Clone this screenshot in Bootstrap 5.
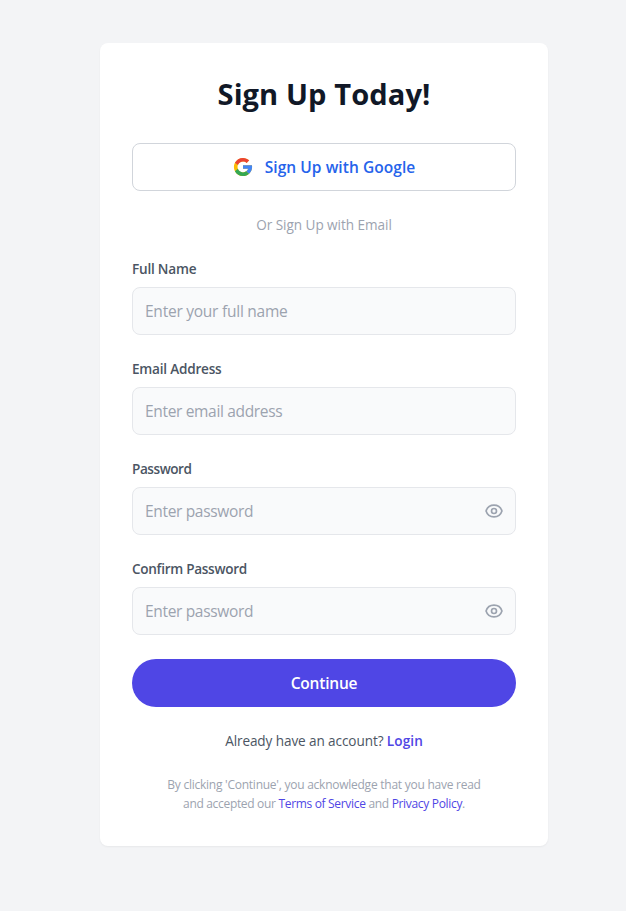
<!DOCTYPE html>
<html lang="en">
<head>
<meta charset="utf-8">
<meta name="viewport" content="width=device-width, initial-scale=1">
<title>Sign Up Today!</title>
<link rel="stylesheet" href="https://cdn.jsdelivr.net/npm/bootstrap@5.3.0/dist/css/bootstrap.min.css">
<style>
  body { background: #f3f4f6; font-family: "Open Sans", "Noto Sans", sans-serif; color: #4b5563; padding: 43px 78px 64px 100px; }
  .signup-card { border-radius: 8px; box-shadow: 0 1px 2px rgba(0,0,0,.05); height: 803px; padding: 32px; }
  .signup-title { font-size: 29.1px; line-height: 36px; letter-spacing: .09px; color: #111827; margin: 1px 0 31px; }
  .google-btn { height: 48px; border: 1px solid #d1d5db; border-radius: 8px; color: #2563eb; font-size: 15.52px; letter-spacing: .05px; gap: 12px; padding: 0; }
  .google-btn span { padding-top: 2px; }
  .text-14 { font-size: 13.58px; line-height: 20px; }
  .divider-text { color: #9ca3af; letter-spacing: -.05px; margin: 24px 0; }
  .field-label { letter-spacing: -.22px; color: #4b5563; margin-bottom: 8px; }
  .label-password { letter-spacing: -.45px; }
  .label-confirm { letter-spacing: -.3px; }
  .field-input, .field-input:focus { height: 48px; border: 1px solid #e5e7eb; border-radius: 8px; background: #f9fafb; font-size: 15.52px; padding: 0 12px; letter-spacing: -.25px; }
  .field-input::placeholder { color: #9ca3af; opacity: 1; }
  .input-tight { letter-spacing: -.34px; }
  .eye-toggle { right: 12px; top: 14px; color: #9ca3af; line-height: 0; }
  .continue-btn, .continue-btn:hover { height: 48px; background: #4f46e5; color: #fff; font-size: 15.52px; letter-spacing: -.22px; border: 0; padding: 8px 0 6px; }
  .accent { color: #4f46e5; }
  .login-line { letter-spacing: -.1px; margin: 24px 0; }
  .login-line .accent { letter-spacing: .08px; }
  .legal { color: #9ca3af; font-size: 12px; line-height: 19px; letter-spacing: -.25px; }
  .legal-second { letter-spacing: -.32px; }
</style>
<script src="https://cdn.jsdelivr.net/npm/bootstrap@5.3.0/dist/js/bootstrap.bundle.min.js"></script>
</head>
<body>
<main class="signup-card bg-white">
  <h1 class="signup-title fw-bold text-center">Sign Up Today!</h1>
  <button type="button" class="google-btn btn bg-white w-100 d-flex align-items-center justify-content-center fw-semibold">
    <svg width="20" height="20" viewBox="2 2 44 44" aria-hidden="true">
      <path fill="#FBBC05" d="M43.611 20.083H42V20H24v8h11.303c-1.649 4.657-6.08 8-11.303 8-6.627 0-12-5.373-12-12s5.373-12 12-12c3.059 0 5.842 1.154 7.961 3.039l5.657-5.657C34.046 6.053 29.268 4 24 4 12.955 4 4 12.955 4 24s8.955 20 20 20 20-8.955 20-20c0-1.341-.138-2.65-.389-3.917z"/>
      <path fill="#EA4335" d="M6.306 14.691l6.571 4.819C14.655 15.108 18.961 12 24 12c3.059 0 5.842 1.154 7.961 3.039l5.657-5.657C34.046 6.053 29.268 4 24 4 16.318 4 9.656 8.337 6.306 14.691z"/>
      <path fill="#34A853" d="M24 44c5.166 0 9.86-1.977 13.409-5.192l-6.19-5.238C29.211 35.091 26.715 36 24 36c-5.202 0-9.619-3.317-11.283-7.946l-6.522 5.025C9.505 39.556 16.227 44 24 44z"/>
      <path fill="#4285F4" d="M43.611 20.083H42V20H24v8h11.303c-.792 2.237-2.231 4.166-4.087 5.571l6.193 5.238C36.971 39.205 44 34 44 24c0-1.341-.138-2.65-.389-3.917z"/>
    </svg>
    <span>Sign Up with Google</span>
  </button>
  <p class="divider-text text-14 text-center">Or Sign Up with Email</p>
  <form>
    <div class="mb-4">
      <label class="field-label text-14 fw-semibold d-block" for="name">Full Name</label>
      <input class="field-input form-control" id="name" type="text" placeholder="Enter your full name">
    </div>
    <div class="mb-4">
      <label class="field-label text-14 fw-semibold d-block" for="email">Email Address</label>
      <input class="field-input input-tight form-control" id="email" type="email" placeholder="Enter email address">
    </div>
    <div class="mb-4">
      <label class="field-label label-password text-14 fw-semibold d-block" for="password">Password</label>
      <div class="position-relative">
        <input class="field-input input-tight form-control" id="password" type="password" placeholder="Enter password">
        <span class="eye-toggle position-absolute">
          <svg width="20" height="20" viewBox="0 0 24 24" fill="none" stroke="currentColor" stroke-width="2" stroke-linecap="round" stroke-linejoin="round"><path d="M15 12a3 3 0 11-6 0 3 3 0 016 0z"/><path d="M2.458 12C3.732 7.943 7.523 5 12 5c4.478 0 8.268 2.943 9.542 7-1.274 4.057-5.064 7-9.542 7-4.477 0-8.268-2.943-9.542-7z"/></svg>
        </span>
      </div>
    </div>
    <div class="mb-4">
      <label class="field-label label-confirm text-14 fw-semibold d-block" for="confirm">Confirm Password</label>
      <div class="position-relative">
        <input class="field-input input-tight form-control" id="confirm" type="password" placeholder="Enter password">
        <span class="eye-toggle position-absolute">
          <svg width="20" height="20" viewBox="0 0 24 24" fill="none" stroke="currentColor" stroke-width="2" stroke-linecap="round" stroke-linejoin="round"><path d="M15 12a3 3 0 11-6 0 3 3 0 016 0z"/><path d="M2.458 12C3.732 7.943 7.523 5 12 5c4.478 0 8.268 2.943 9.542 7-1.274 4.057-5.064 7-9.542 7-4.477 0-8.268-2.943-9.542-7z"/></svg>
        </span>
      </div>
    </div>
    <button type="button" class="continue-btn btn w-100 rounded-pill fw-semibold">Continue</button>
  </form>
  <p class="login-line text-14 text-center">Already have an account? <a href="#" class="accent fw-semibold text-decoration-none">Login</a></p>
  <p class="legal text-center mb-0">By clicking 'Continue', you acknowledge that you have read<br><span class="legal-second">and accepted our <a href="#" class="accent text-decoration-none">Terms of Service</a> and <a href="#" class="accent text-decoration-none">Privacy Policy</a>.</span></p>
</main>
</body>
</html>
